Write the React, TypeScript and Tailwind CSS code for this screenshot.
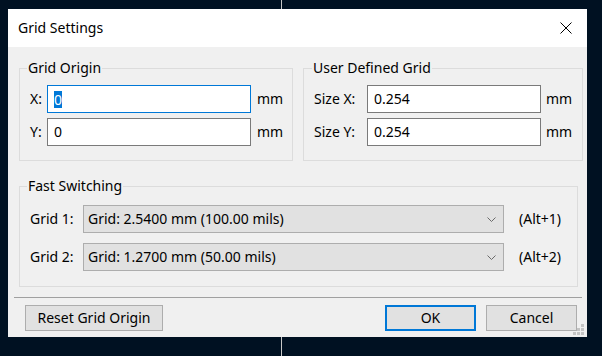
import React from "react";

const font = { fontFamily: '"Noto Sans", "Open Sans", sans-serif' };

function Chevron() {
  return (
    <svg width="9" height="5" viewBox="0 0 9 5" className="shrink-0">
      <path d="M0.5 0.5 L4.5 4.5 L8.5 0.5" fill="none" stroke="#6a6a6a" strokeWidth="1" />
    </svg>
  );
}

function Select({ text }: { text: string }) {
  return (
    <div className="w-[421px] h-[28px] bg-[#e1e1e1] border border-[#adadad] flex items-center justify-between pl-[4px] pr-[7px]">
      <span className="whitespace-nowrap">{text}</span>
      <Chevron />
    </div>
  );
}

export default function App() {
  return (
    <div
      className="relative w-[602px] h-[356px] bg-[#001122] overflow-hidden text-[14px] leading-[18px] text-black"
      style={font}
    >
      <div className="absolute left-[281px] top-0 h-full w-px bg-[#c8c8c8]" />
      <div className="relative pl-[8px] pt-[9px]">
        <div className="relative w-[579px] h-[328px] flex flex-col bg-[#f0f0f0]">
          {/* title bar */}
          <div className="h-[38px] bg-white flex items-center justify-between pl-[10px] pr-[15px]">
            <span>Grid Settings</span>
            <svg width="12" height="12" viewBox="0 0 12 12">
              <path d="M0.5 0.5 L11.5 11.5 M11.5 0.5 L0.5 11.5" stroke="#000" strokeWidth="1" fill="none" />
            </svg>
          </div>

          {/* body */}
          <div className="flex flex-col pl-[11px] pt-[12px]">
            <div className="flex gap-[10px]">
              <fieldset className="w-[274px] border border-[#dcdcdc] pt-[8px] pb-[14px]">
                <legend className="ml-[7px] px-[1px] leading-[18px]">Grid Origin</legend>
                <div className="flex flex-col gap-[5px] pl-[10px]">
                  <div className="flex items-center">
                    <span className="w-[17px]">X:</span>
                    <div className="w-[204px] h-[28px] bg-white border border-[#0078d7] flex items-center pl-[6px]">
                      <span className="bg-[#0078d7] text-white leading-[17px]">0</span>
                    </div>
                    <span className="ml-[6px]">mm</span>
                  </div>
                  <div className="flex items-center">
                    <span className="w-[17px]">Y:</span>
                    <div className="w-[204px] h-[28px] bg-white border border-[#7a7a7a] flex items-center pl-[6px]">
                      <span>0</span>
                    </div>
                    <span className="ml-[6px]">mm</span>
                  </div>
                </div>
              </fieldset>
              <fieldset className="w-[280px] border border-[#dcdcdc] pt-[8px] pb-[14px]">
                <legend className="ml-[8px] px-[1px] leading-[18px]">User Defined Grid</legend>
                <div className="flex flex-col gap-[5px] pl-[10px]">
                  <div className="flex items-center">
                    <span className="w-[53px]">Size X:</span>
                    <div className="w-[174px] h-[28px] bg-white border border-[#7a7a7a] flex items-center pl-[6px]">
                      <span>0.254</span>
                    </div>
                    <span className="ml-[5px]">mm</span>
                  </div>
                  <div className="flex items-center">
                    <span className="w-[53px]">Size Y:</span>
                    <div className="w-[174px] h-[28px] bg-white border border-[#7a7a7a] flex items-center pl-[6px]">
                      <span>0.254</span>
                    </div>
                    <span className="ml-[5px]">mm</span>
                  </div>
                </div>
              </fieldset>
            </div>

            <fieldset className="mt-[16px] w-[559px] border border-[#dcdcdc] pt-[10px] pb-[15px]">
              <legend className="ml-[7px] px-[1px] leading-[18px]">Fast Switching</legend>
              <div className="flex flex-col gap-[10px] pl-[10px]">
                <div className="flex items-center">
                  <span className="w-[53px]">Grid 1:</span>
                  <Select text="Grid: 2.5400 mm (100.00 mils)" />
                  <span className="ml-[15px]">(Alt+1)</span>
                </div>
                <div className="flex items-center">
                  <span className="w-[53px]">Grid 2:</span>
                  <Select text="Grid: 1.2700 mm (50.00 mils)" />
                  <span className="ml-[15px]">(Alt+2)</span>
                </div>
              </div>
            </fieldset>
          </div>

          {/* footer */}
          <div className="flex flex-col pl-[6px] mt-[10px]">
            <div className="w-[568px] h-px bg-[#a0a0a0]" />
            <div className="flex items-center mt-[7px] pl-[11px] pr-[10px]">
              <button className="w-[138px] h-[26px] bg-[#e1e1e1] border border-[#adadad] flex items-center justify-center">
                Reset Grid Origin
              </button>
              <div className="flex-1" />
              <button className="w-[91px] h-[26px] bg-[#e1e1e1] border-2 border-[#0078d7] flex items-center justify-center">
                OK
              </button>
              <button className="ml-[10px] w-[91px] h-[26px] bg-[#e1e1e1] border border-[#adadad] flex items-center justify-center">
                Cancel
              </button>
            </div>
          </div>

          {/* resize grip */}
          <svg className="absolute right-[3px] bottom-[2px]" width="11" height="11" viewBox="0 0 11 11">
            <rect x="8" y="0" width="3" height="3" fill="#c4c4c4" />
            <rect x="4" y="4" width="3" height="3" fill="#c4c4c4" />
            <rect x="8" y="4" width="3" height="3" fill="#c4c4c4" />
            <rect x="0" y="8" width="3" height="3" fill="#c4c4c4" />
            <rect x="4" y="8" width="3" height="3" fill="#c4c4c4" />
            <rect x="8" y="8" width="3" height="3" fill="#c4c4c4" />
          </svg>
        </div>
      </div>
    </div>
  );
}
